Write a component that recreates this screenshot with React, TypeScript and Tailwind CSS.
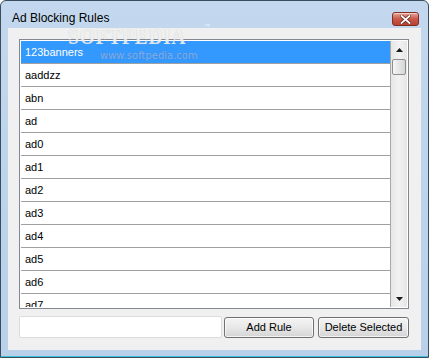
import React from "react";

const items = [
  "123banners",
  "aaddzz",
  "abn",
  "ad",
  "ad0",
  "ad1",
  "ad2",
  "ad3",
  "ad4",
  "ad5",
  "ad6",
  "ad7",
];

export default function App() {
  return (
    <div
      className="relative w-[429px] h-[358px] flex flex-col overflow-hidden rounded-t-[6px] border border-[#3b4c5e] bg-gradient-to-b from-[#c3d8ee] to-[#b8d0ea]"
      style={{ fontFamily: '"Liberation Sans", Arial, sans-serif' }}
    >
      {/* title bar */}
      <div className="h-[27px] flex items-center justify-between pl-[11px] pr-[9px] shrink-0">
        <span className="text-[12px] text-black leading-none mt-[6px]">Ad Blocking Rules</span>
        <div className="w-[27px] h-[14px] mt-[9px] rounded-[3px] border border-[#7d2f25] bg-gradient-to-b from-[#e4a597] via-[#c9574a] to-[#b9412f] flex items-center justify-center shadow-[inset_0_1px_0_rgba(255,255,255,0.5)]">
          <svg width="11" height="9" viewBox="0 0 11 9">
            <path d="M1.5 1 L9.5 8 M9.5 1 L1.5 8" stroke="#5a1e16" strokeWidth="3.2" strokeLinecap="square" />
            <path d="M1.5 1 L9.5 8 M9.5 1 L1.5 8" stroke="#ffffff" strokeWidth="1.8" strokeLinecap="square" />
          </svg>
        </div>
      </div>

      {/* client */}
      <div className="mx-[7px] mb-[6px] flex-1 flex flex-col bg-[#f0f0f0] pl-[11px] pr-[12px] pt-[11px] pb-[12px]">
        {/* list */}
        <div className="h-[270px] w-[390px] border border-[#828790] bg-white p-[1px] flex overflow-hidden">
          <div className="flex-1 flex flex-col overflow-hidden">
            {items.map((it, i) => (
              <div
                key={it}
                className={
                  i === 0
                    ? "h-[23px] shrink-0 flex items-center pl-[4px] text-[11px] bg-[#3399ff] text-white border-b border-[#a0a0a0]"
                    : "h-[23px] shrink-0 flex items-center pl-[4px] text-[11px] bg-white text-black border-b border-[#a0a0a0]"
                }
              >
                {it}
              </div>
            ))}
          </div>
          <div className="w-[17px] shrink-0 flex flex-col items-center border-l border-[#a8a8a8] bg-gradient-to-r from-[#e6e6e6] via-[#f2f2f2] to-[#e6e6e6]">
            <div className="h-[17px] w-full flex items-center justify-center">
              <svg width="7" height="4" viewBox="0 0 7 4">
                <path d="M3.5 0 L7 4 L0 4 Z" fill="#1a1a1a" />
              </svg>
            </div>
            <div className="mt-[1px] w-[14px] h-[16px] rounded-[2px] border border-[#8e8f8f] bg-gradient-to-r from-[#f6f6f6] to-[#d6d6d6]" />
            <div className="flex-1" />
            <div className="h-[17px] w-full flex items-center justify-center">
              <svg width="7" height="4" viewBox="0 0 7 4">
                <path d="M0 0 L7 0 L3.5 4 Z" fill="#1a1a1a" />
              </svg>
            </div>
          </div>
        </div>

        {/* controls */}
        <div className="mt-[7px] h-[22px] flex items-center">
          <div className="w-[203px] h-[22px] rounded-[2px] border border-[#dcdcdc] bg-white" />
          <button className="ml-[2px] w-[90px] h-[21px] rounded-[3px] border border-[#707070] bg-gradient-to-b from-[#f4f4f4] via-[#e8e8e8] to-[#d4d4d4] text-[11px] text-black flex items-center justify-center shadow-[inset_0_0_0_1px_rgba(255,255,255,0.7)]">
            Add Rule
          </button>
          <button className="ml-[4px] w-[91px] h-[21px] rounded-[3px] border border-[#707070] bg-gradient-to-b from-[#f4f4f4] via-[#e8e8e8] to-[#d4d4d4] text-[11px] text-black flex items-center justify-center shadow-[inset_0_0_0_1px_rgba(255,255,255,0.7)]">
            Delete Selected
          </button>
        </div>
      </div>
      <div className="h-[1px] bg-[#3cc0d8] shrink-0" />

      {/* watermark */}
      <div
        className="absolute left-[56px] top-[24px] text-[23px] font-bold leading-none tracking-[1px] text-white/75 pointer-events-none scale-x-[0.84] [text-shadow:0_0_1px_rgba(160,160,160,0.6)]"
        style={{ fontFamily: '"Liberation Serif", serif' }}
      >
        SOFTPEDIA
      </div>
      <div className="absolute left-[203px] top-[22px] text-[6px] leading-none text-white/70 pointer-events-none">™</div>
      <div
        className="absolute left-[99px] top-[50px] text-[10px] leading-none text-[#7fb0ea] pointer-events-none [text-shadow:0_0_1px_#4a7fc8]"
        style={{ fontFamily: '"DejaVu Sans", Verdana, sans-serif' }}
      >
        www.softpedia.com
      </div>
    </div>
  );
}
